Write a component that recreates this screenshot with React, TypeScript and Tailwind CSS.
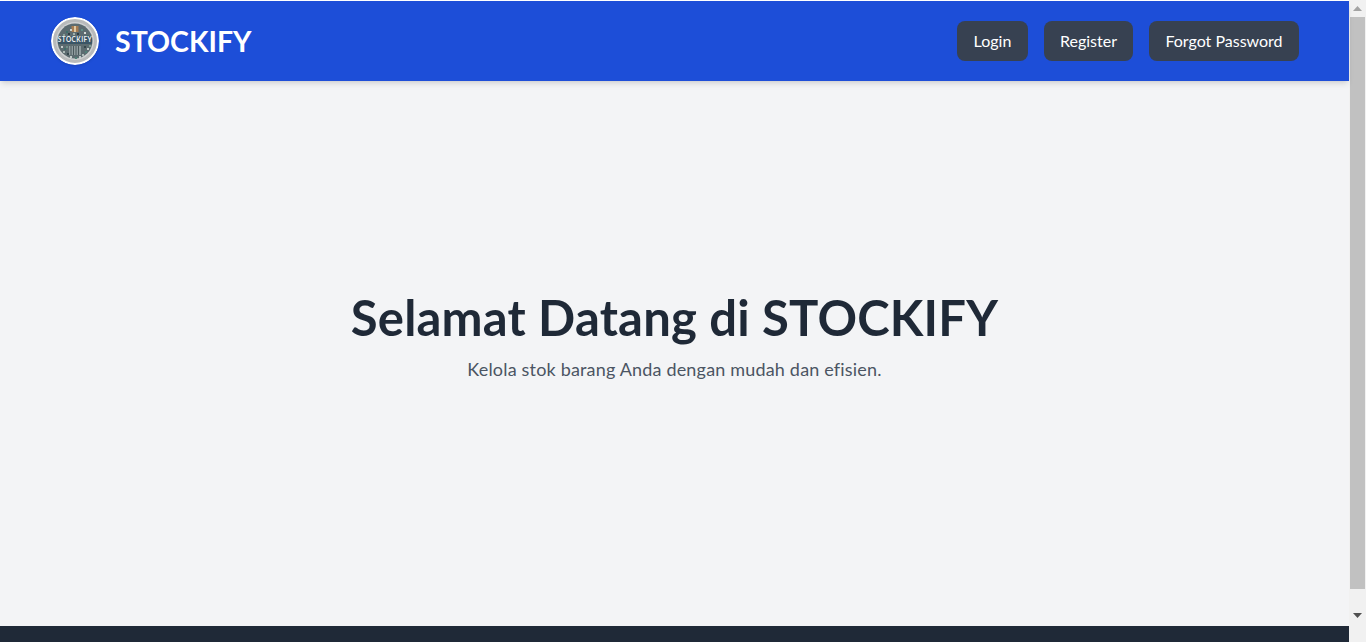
const specks: [number, number, string][] = [
  [15, 14, "#3f6f6a"], [19, 12, "#c9d2d0"], [30, 12, "#5f8f86"], [33, 15, "#d5dbd8"], [12, 17, "#88a09a"],
  [17, 16, "#2f3d42"], [26, 16, "#2f3d42"], [36, 18, "#3f6f6a"], [22, 16, "#9fb0ac"],
  [10, 29, "#c4ccca"], [13, 31, "#3f6f6a"], [12, 34, "#aebbb8"], [16, 36, "#35464c"], [15, 29, "#6f8f88"],
  [33, 29, "#35464c"], [36, 31, "#c4ccca"], [34, 34, "#4f7f76"], [31, 37, "#aebbb8"], [38, 28, "#7f9f97"],
  [19, 39, "#c4ccca"], [24, 40, "#4f7f76"], [28, 39, "#c4ccca"],
];

export default function App() {
  return (
    <div className="flex h-[642px] w-full overflow-hidden bg-white font-['Lato','Noto_Sans',sans-serif] [font-variant-ligatures:none]">
      <div className="flex min-w-0 flex-1 flex-col pt-px">
        <header className="relative z-10 flex h-20 items-center justify-between bg-[#1d4ed8] pl-[51px] pr-[50px] shadow-md">
          <div className="flex items-center gap-4">
            <Logo />
            <span className="text-[28.5px] font-bold text-white">STOCKIFY</span>
          </div>
          <nav className="flex items-center gap-4">
            <a className="flex h-10 w-[71px] items-center justify-center rounded-lg bg-[#374151] text-base text-white">Login</a>
            <a className="flex h-10 w-[89px] items-center justify-center rounded-lg bg-[#374151] text-base text-white">Register</a>
            <a className="flex h-10 w-[150px] items-center justify-center rounded-lg bg-[#374151] text-base text-white">Forgot Password</a>
          </nav>
        </header>
        <main className="flex flex-1 flex-col items-center justify-center bg-[#f3f4f6] pb-[32px] text-center">
          <h1 className="text-[49px] leading-[48px] font-bold tracking-[0.2px] text-[#1f2937]">Selamat Datang di STOCKIFY</h1>
          <p className="mt-[14px] text-lg leading-7 tracking-[0.18px] text-[#4b5563]">Kelola stok barang Anda dengan mudah dan efisien.</p>
        </main>
        <footer className="h-4 bg-[#1f2937]" />
      </div>
      <div className="flex w-[17px] shrink-0 flex-col bg-[#f1f1f1]">
        <div className="flex h-[17px] items-center justify-center">
          <svg width="9" height="5" viewBox="0 0 9 5"><path d="M4.5 0 9 5H0z" fill="#a3a3a3" /></svg>
        </div>
        <div className="mx-px h-[572px] bg-[#c1c1c1]" />
        <div className="flex flex-1 items-center justify-center">
          <svg width="9" height="5" viewBox="0 0 9 5"><path d="M0 0h9L4.5 5z" fill="#505050" /></svg>
        </div>
      </div>
    </div>
  );
}

function Logo() {
  return (
    <svg width="48" height="48" viewBox="0 0 48 48" className="shrink-0 rounded-full shadow-sm">
      <circle cx="24" cy="24" r="23" fill="#b8babb" stroke="#ffffff" strokeWidth="2" />
      <circle cx="24" cy="24" r="19" fill="#cfd1d2" />
      <circle cx="24" cy="24" r="17.5" fill="#5c6b70" />
      <rect x="20.5" y="9" width="7" height="6" fill="#a67c52" />
      <rect x="23" y="9" width="2" height="6" fill="#e0c8a0" />
      {specks.map(([x, y, c]) => (
        <rect key={`${x}-${y}`} x={x} y={y} width="2" height="2" fill={c} />
      ))}
      <rect x="7" y="19" width="34" height="8" rx="1" fill="#3a5566" />
      <text x="24" y="25.3" textAnchor="middle" fontSize="6.5" fontWeight="700" fill="#eef1f2" fontFamily="Lato, sans-serif" letterSpacing="0.4">STOCKIFY</text>
      <rect x="18" y="29" width="12" height="9" fill="#8f9b9e" />
      <path d="M20 29v9M22.500 29v9M25 29v9M27.500 29v9" stroke="#4a585c" strokeWidth="1" />
    </svg>
  );
}
